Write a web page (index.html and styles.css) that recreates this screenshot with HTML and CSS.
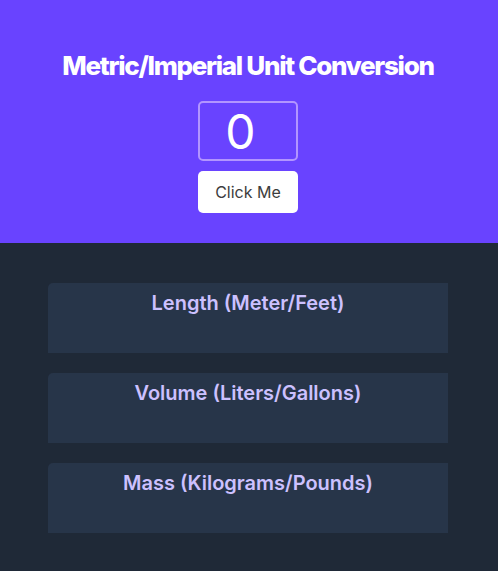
FILE: index.html
```html
<!DOCTYPE html>
<html lang="en">
<head>
<meta charset="utf-8">
<meta name="viewport" content="width=device-width, initial-scale=1">
<title>Unit Conversion</title>
<link rel="stylesheet" href="styles.css">
</head>
<body>
<header class="top">
  <h1 class="title">Metric/Imperial Unit Conversion</h1>
  <input class="amount" type="number" value="0" aria-label="Value to convert">
  <button class="convert" type="button">Click Me</button>
</header>
<main class="results">
  <section class="card"><h2 class="card-title">Length (Meter/Feet)</h2></section>
  <section class="card"><h2 class="card-title">Volume (Liters/Gallons)</h2></section>
  <section class="card"><h2 class="card-title">Mass (Kilograms/Pounds)</h2></section>
</main>
</body>
</html>
```
FILE: styles.css
```css
* {
  box-sizing: border-box;
}

body {
  margin: 0;
  min-height: 100vh;
  background: #1f2937;
  font-family: Inter, sans-serif;
}

.top {
  display: flex;
  flex-direction: column;
  align-items: center;
  gap: 10px;
  padding: 50px 32px 30px 30px;
  background: #6943ff;
}

.title {
  margin: 0 0 10px;
  color: #fff;
  font-size: 26px;
  font-weight: 800;
  line-height: 31px;
  letter-spacing: -0.05em;
}

.amount {
  width: 100px;
  height: 60px;
  padding: 0;
  border: 2px solid #b295ff;
  border-radius: 5px;
  background: transparent;
  color: #fff;
  font-family: inherit;
  font-size: 48px;
  text-align: center;
}

.convert {
  width: 100px;
  height: 42px;
  padding: 0;
  border: 0;
  border-radius: 5px;
  background: #fff;
  color: #3d3d3d;
  font-family: inherit;
  font-size: 16px;
}

.results {
  display: grid;
  gap: 20px;
  padding: 40px 50px 40px 48px;
}

.card {
  min-height: 70px;
  padding: 8px;
  border-radius: 5px 0 0;
  background: #273549;
  text-align: center;
}

.card-title {
  margin: 0;
  color: #ccc1ff;
  font-size: 20px;
  font-weight: 600;
  line-height: 24px;
}
```
